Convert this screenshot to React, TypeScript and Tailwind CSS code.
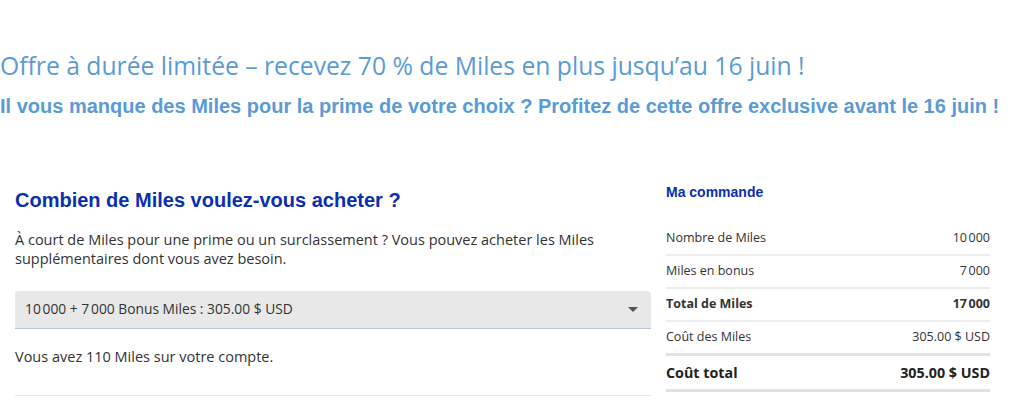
import React from "react";

const rows = [
  { label: "Nombre de Miles", value: "10\u202F000", bold: false },
  { label: "Miles en bonus", value: "7\u202F000", bold: false },
  { label: "Total de Miles", value: "17\u202F000", bold: true },
];

export default function App() {
  return (
    <div className="w-[1024px] h-[407px] bg-white overflow-hidden">
      <div className="pt-[50px]">
        <h1 className="text-[24.7px] leading-[32px] text-[#5b9bd5] font-['Open_Sans',sans-serif] font-normal whitespace-nowrap">
          Offre à durée limitée – recevez 70 % de Miles en plus jusqu’au 16 juin !
        </h1>
        <h2 className="mt-[12px] text-[20px] leading-[24px] text-[#5b9bd5] font-['Liberation_Sans',Arial,sans-serif] font-bold whitespace-nowrap">
          Il vous manque des Miles pour la prime de votre choix ? Profitez de cette offre exclusive avant le 16 juin !
        </h2>
      </div>
      <div className="flex items-start gap-[15px] pl-[15px] mt-[62px]">
        <div className="w-[636px] pt-[8px]">
          <h3 className="text-[20px] leading-[24px] font-bold text-[#0b2fae] font-['Liberation_Sans',Arial,sans-serif]">
            Combien de Miles voulez-vous acheter ?
          </h3>
          <p className="mt-[18px] text-[14.5px] leading-[19px] text-[#333] font-['Open_Sans',sans-serif]">
            À court de Miles pour une prime ou un surclassement ? Vous pouvez acheter les Miles supplémentaires dont vous avez besoin.
          </p>
          <div className="mt-[23px] h-[38px] bg-[#e8e8e8] rounded-t-[4px] border-b border-[#b7c4dc] flex items-center justify-between pl-[10px] pr-[13px]">
            <span className="text-[13.8px] text-[#333] font-['Open_Sans',sans-serif]">
              10{"\u202F"}000 + 7{"\u202F"}000 Bonus Miles : 305.00 $ USD
            </span>
            <svg width="10" height="6" viewBox="0 0 10 6">
              <path d="M0 0 L10 0 L5 5 Z" fill="#555" />
            </svg>
          </div>
          <p className="mt-[18px] text-[14.5px] leading-[19px] text-[#333] font-['Open_Sans',sans-serif]">
            Vous avez 110 Miles sur votre compte.
          </p>
          <div className="mt-[29px] border-t border-[#e6e6e6]" />
        </div>
        <div className="w-[324px] font-['Open_Sans',sans-serif]">
          <div className="text-[14px] leading-[18px] font-bold text-[#0b2fae] font-['Liberation_Sans',Arial,sans-serif] mt-[3px]">
            Ma commande
          </div>
          <div className="mt-[22px]">
            {rows.map((r) => (
              <div
                key={r.label}
                className={`flex justify-between items-center h-[33px] border-b-2 border-[#eeeeee] text-[12.5px] text-[#333] ${r.bold ? "font-bold" : ""}`}
              >
                <span>{r.label}</span>
                <span>{r.value}</span>
              </div>
            ))}
            <div className="flex justify-between items-center h-[34px] border-b-[3px] border-[#e2e2e2] text-[12.5px] text-[#333]">
              <span>Coût des Miles</span>
              <span>305.00 $ USD</span>
            </div>
            <div className="flex justify-between items-center h-[36px] border-b-[3px] border-[#e2e2e2] text-[14.3px] font-bold text-[#222]">
              <span>Coût total</span>
              <span>305.00 $ USD</span>
            </div>
          </div>
        </div>
      </div>
    </div>
  );
}
